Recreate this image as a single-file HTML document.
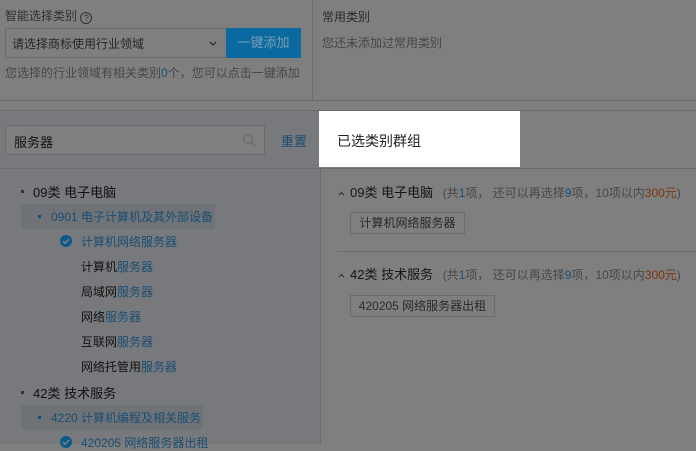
<!DOCTYPE html>
<html><head><meta charset="utf-8"><style>
*{margin:0;padding:0;box-sizing:border-box}
html,body{background:#7f7f7f}
body{width:696px;height:444px;overflow:hidden;font-family:"Liberation Sans","Noto Sans CJK SC",sans-serif;font-size:12px;color:#111;position:relative}
.a{position:absolute;white-space:nowrap}
.b{color:#1b4e73}
.g{color:#474747}
.o{color:#7a3510}
.hl{background:#6f7377}
</style></head><body>
<div class="a" style="left:312px;top:0;width:1px;height:100px;background:#6c6c6c"></div>
<div class="a" style="left:0;top:100px;width:696px;height:1px;background:#6c6c6c"></div>
<div class="a" style="left:0;top:110px;width:696px;height:1px;background:#6c6c6c"></div>
<div class="a" style="left:0;top:111px;width:320px;height:333px;background:#77797c"></div>
<div class="a" style="left:320px;top:111px;width:1px;height:333px;background:#6c6c6c"></div>
<div class="a" style="left:0;top:168px;width:696px;height:1px;background:#6c6c6c"></div>

<div class="a" style="left:5px;top:7px;font-size:12px;color:#303030">智能选择类别 <span style="display:inline-block;width:12px;height:12px;border:1px solid #333;border-radius:50%;font-size:9px;line-height:10px;text-align:center;vertical-align:-1px">?</span></div>
<div class="a" style="left:5px;top:28px;width:222px;height:30px;border:1px solid #6c6c6c;background:#7f7f7f"></div>
<div class="a" style="left:12px;top:35px;color:#262626">请选择商标使用行业领域</div>
<svg class="a" style="left:209px;top:41px" width="8" height="5"><path d="M1 1l3 3 3-3" fill="none" stroke="#222" stroke-width="1.2"/></svg>
<div class="a" style="left:226px;top:28px;width:75px;height:30px;background:#0a6aa0;color:#7a9db4;font-size:13px;text-align:center;line-height:30px">一键添加</div>
<div class="a" style="left:5px;top:64px;color:#474747">您选择的行业领域有相关类别<span class="b">0</span>个，您可以点击一键添加</div>
<div class="a" style="left:322px;top:8px;color:#2a2a2a">常用类别</div>
<div class="a" style="left:322px;top:34px;color:#474747">您还未添加过常用类别</div>

<div class="a" style="left:5px;top:125px;width:260px;height:30px;border:1px solid #6c6c6c;background:#7f7f7f"></div>
<div class="a" style="left:14px;top:132px;font-size:13px;color:#111">服务器</div>
<svg class="a" style="left:242px;top:133px" width="14" height="14"><circle cx="6" cy="6" r="4.5" fill="none" stroke="#6a6a6a" stroke-width="1.2"/><line x1="9.5" y1="9.5" x2="13" y2="13" stroke="#6a6a6a" stroke-width="1.2"/></svg>
<div class="a b" style="left:281px;top:131px;font-size:13px">重置</div>

<div class="a" style="left:319px;top:111px;width:201px;height:56px;background:#fff"></div>
<div class="a" style="left:337px;top:131px;font-size:14px;color:#222">已选类别群组</div>

<div class="a" style="left:21px;top:190px;width:3px;height:3px;background:#333"></div>
<div class="a" style="left:33px;top:182px;font-size:13px">09类 电子电脑</div>
<div class="a hl" style="left:21px;top:204px;width:194px;height:25px"></div>
<div class="a" style="left:38px;top:215px;width:3px;height:3px;background:#1b4e73"></div>
<div class="a b" style="left:51px;top:208px">0901 电子计算机及其外部设备</div>
<svg class="a" style="left:60px;top:235px" width="12" height="12"><circle cx="6" cy="6" r="6" fill="#0b5a8a"/><path d="M3 6.2l2 2 4-4" fill="none" stroke="#7f7f7f" stroke-width="1.5"/></svg>
<div class="a b" style="left:81px;top:233px">计算机网络服务器</div>
<div class="a" style="left:81px;top:258px">计算机<span class="b">服务器</span></div>
<div class="a" style="left:81px;top:283px">局域网<span class="b">服务器</span></div>
<div class="a" style="left:81px;top:308px">网络<span class="b">服务器</span></div>
<div class="a" style="left:81px;top:333px">互联网<span class="b">服务器</span></div>
<div class="a" style="left:81px;top:358px">网络托管用<span class="b">服务器</span></div>
<div class="a" style="left:21px;top:391px;width:3px;height:3px;background:#333"></div>
<div class="a" style="left:33px;top:383px;font-size:13px">42类 技术服务</div>
<div class="a hl" style="left:21px;top:405px;width:182px;height:25px"></div>
<div class="a" style="left:38px;top:416px;width:3px;height:3px;background:#1b4e73"></div>
<div class="a b" style="left:51px;top:409px">4220 计算机编程及相关服务</div>
<svg class="a" style="left:60px;top:436px" width="12" height="12"><circle cx="6" cy="6" r="6" fill="#0b5a8a"/><path d="M3 6.2l2 2 4-4" fill="none" stroke="#7f7f7f" stroke-width="1.5"/></svg>
<div class="a b" style="left:81px;top:434px">420205 网络服务器出租</div>

<svg class="a" style="left:338px;top:191px" width="7" height="5"><path d="M1 4l2.5-2.5 2.5 2.5" fill="none" stroke="#333" stroke-width="1.1"/></svg>
<div class="a" style="left:350px;top:182px;font-size:13px;color:#151515">09类 电子电脑 <span class="g" style="font-size:12px;margin-left:6px">(共<span class="b">1</span>项， 还可以再选择<span class="b">9</span>项，10项以内<span class="o">300元</span>)</span></div>
<div class="a" style="left:350px;top:212px;width:115px;height:22px;border:1px solid #6c6c6c;text-align:center;line-height:20px;color:#2a2a2a">计算机网络服务器</div>
<div class="a" style="left:337px;top:251px;width:359px;height:1px;background:#6c6c6c"></div>
<svg class="a" style="left:338px;top:273px" width="7" height="5"><path d="M1 4l2.5-2.5 2.5 2.5" fill="none" stroke="#333" stroke-width="1.1"/></svg>
<div class="a" style="left:350px;top:264px;font-size:13px;color:#151515">42类 技术服务 <span class="g" style="font-size:12px;margin-left:6px">(共<span class="b">1</span>项， 还可以再选择<span class="b">9</span>项，10项以内<span class="o">300元</span>)</span></div>
<div class="a" style="left:350px;top:295px;width:145px;height:22px;border:1px solid #6c6c6c;text-align:center;line-height:20px;color:#2a2a2a">420205 网络服务器出租</div>
</body></html>
